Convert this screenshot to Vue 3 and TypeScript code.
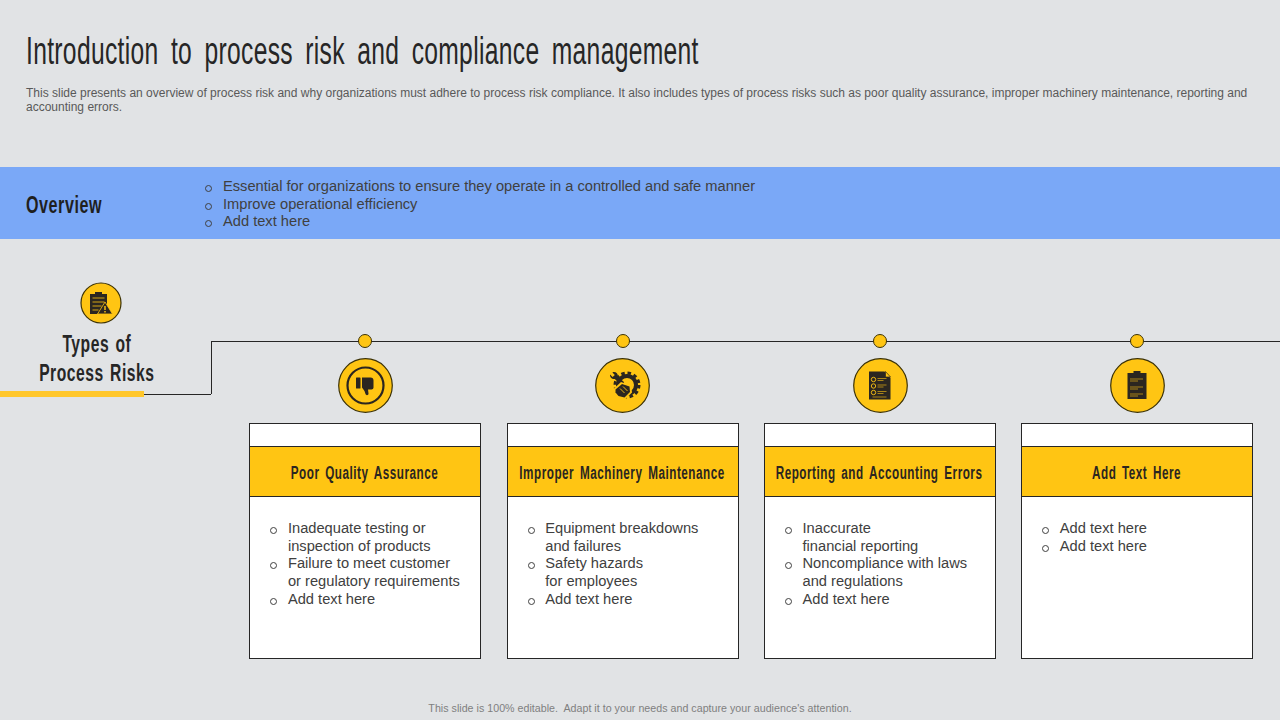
<script setup lang="ts">
interface Risk { icon: string; title: string; items: string[][] }
const overview: string[] = [
  'Essential for organizations to ensure they operate in a controlled and safe manner',
  'Improve operational efficiency',
  'Add text here',
]
const risks: Risk[] = [
  { icon: 'thumb', title: 'Poor Quality Assurance', items: [['Inadequate testing or', 'inspection of products'], ['Failure to meet customer', 'or regulatory requirements'], ['Add text here']] },
  { icon: 'gear', title: 'Improper Machinery Maintenance', items: [['Equipment breakdowns', 'and failures'], ['Safety hazards', 'for employees'], ['Add text here']] },
  { icon: 'doc', title: 'Reporting and Accounting Errors', items: [['Inaccurate', 'financial reporting'], ['Noncompliance with laws', 'and regulations'], ['Add text here']] },
  { icon: 'clip', title: 'Add Text Here', items: [['Add text here'], ['Add text here']] },
]
</script>

<template>
  <main class="slide">
    <header class="head">
      <h1 class="title"><span>Introduction to process risk and compliance management</span></h1>
      <p class="desc">This slide presents an overview of process risk and why organizations must adhere to process risk compliance. It also includes types of process risks such as poor quality assurance, improper machinery maintenance, reporting and accounting errors.</p>
    </header>

    <section class="band">
      <h2 class="band-title"><span>Overview</span></h2>
      <ul class="list band-list">
        <li v-for="t in overview" :key="t"><span>{{ t }}</span></li>
      </ul>
    </section>

    <section class="risks">
      <div class="intro">
        <svg class="intro-icon" viewBox="0 0 42 42">
          <circle cx="21" cy="21" r="20" fill="#ffc513" stroke="#3c3206" stroke-width="1.2" />
          <path d="M10 12h5v-2h7v2h5v11l-6 9H10z" fill="#2b2620" />
          <path d="M12.500 16h12M12.500 20h12M12.500 24h9M12.500 28h6" stroke="#ffc513" stroke-width="0.8" />
          <path d="M25 20l7.500 12h-15z" fill="#2b2620" stroke="#ffc513" stroke-width="0.8" />
          <path d="M25 24v4M25 29v1.500" stroke="#ffc513" stroke-width="1.400" />
        </svg>
        <h2 class="intro-title"><span>Types of<br />Process Risks</span></h2>
        <div class="rule"><i></i><b></b></div>
      </div>

      <div class="track">
        <span class="wire"></span>
        <article v-for="r in risks" :key="r.title" class="col">
          <span class="dot"></span>
          <svg class="badge" viewBox="0 0 55 55">
            <circle cx="27.500" cy="27.500" r="26.800" fill="#ffc513" stroke="#3c3206" stroke-width="1.200" />
            <template v-if="r.icon === 'thumb'">
              <circle cx="27.500" cy="27.500" r="18" fill="none" stroke="#2b2620" stroke-width="2.200" />
              <rect x="18" y="19.500" width="4.500" height="11" rx="0.600" fill="#2b2620" />
              <path d="M24 19.500h8.500c2 0 3 1.200 3 3v7c0 1.300-.9 2-2 2h-3.500l.5 4c.2 1.800-2.300 2.500-3 .6l-1-3.200-2.500-3.400z" fill="#2b2620" />
            </template>
            <template v-else-if="r.icon === 'gear'">
              <circle cx="32" cy="27" r="9" fill="none" stroke="#2b2620" stroke-width="4" />
              <circle cx="32" cy="27" r="12" fill="none" stroke="#2b2620" stroke-width="3" stroke-dasharray="3.500 2.800" />
              <path d="M15 16.500l2.600 2.400 2.200-1.900-2.400-2.600c2.800-1.200 5.800.8 5.400 3.800l6.400 6-3 3-6.400-6.200c-2.900.4-5.100-1.900-4.800-4.500z" fill="#2b2620" />
              <path d="M18.500 31l7.500-7 10 3.500 1 7-7 7-8-2-4-5z" fill="#ffc513" />
              <path d="M20.500 31.500l6.500-5.500 7.500 2.500.5 5.500-5.500 5.500-6-1.500-3-3.500z" fill="#2b2620" />
              <path d="M25 30.500l4.500 4.500M28 28.500l4.500 4.500" stroke="#ffc513" stroke-width="0.900" />
            </template>
            <template v-else-if="r.icon === 'doc'">
              <path d="M16 13.500h15.500l6 6.500v21.500h-21.500z" fill="#2b2620" />
              <path d="M32.500 13.500l5 5.500h-5z" fill="#ffc513" stroke="#2b2620" stroke-width="0.700" />
              <circle cx="20.500" cy="21.500" r="2.200" fill="none" stroke="#ffc513" stroke-width="0.900" />
              <circle cx="20.500" cy="28" r="2.200" fill="none" stroke="#ffc513" stroke-width="0.900" />
              <circle cx="20.500" cy="34.500" r="2.200" fill="none" stroke="#ffc513" stroke-width="0.900" />
              <path d="M24.500 20.500h9M24.500 22.500h6M24.500 27h9M24.500 29h6M24.500 33.500h9M24.500 35.500h6M19.500 39h14" stroke="#ffc513" stroke-width="0.600" />
            </template>
            <template v-else>
              <path d="M17.500 15h6v-2h7v2h6v26h-19z" fill="#2b2620" />
              <path d="M20 21h13M20 23h8M20 29h13M20 31h8M20 36h13M20 38h8" stroke="#ffc513" stroke-width="0.600" />
            </template>
          </svg>
          <div class="card">
            <div class="card-top"></div>
            <h3 class="card-head"><span>{{ r.title }}</span></h3>
            <ul class="list card-list">
              <li v-for="(lines, i) in r.items" :key="i">
                <span><template v-for="(l, j) in lines" :key="j">{{ l }}<br v-if="j < lines.length - 1" /></template></span>
              </li>
            </ul>
          </div>
        </article>
      </div>
    </section>

    <footer class="foot">This slide is 100% editable.&nbsp; Adapt it to your needs and capture your audience's attention.</footer>
  </main>
</template>

<style scoped>
.slide {
  width: 1280px;
  height: 720px;
  overflow: hidden;
  background: #e1e3e5;
  font-family: "Liberation Sans", Arial, sans-serif;
  color: #404040;
  display: flex;
  flex-direction: column;
}
.head { height: 167px; padding: 30px 26px 0; box-sizing: border-box; }
.title {
  margin: 0;
  height: 42px;
  font: 400 38px/42px "Liberation Sans Narrow", "Liberation Sans", sans-serif;
  color: #262626;
  white-space: nowrap;
}
.title span { display: inline-block; transform: scaleX(0.648); transform-origin: left center; word-spacing: 8px; letter-spacing: 0.5px; }
.desc {
  margin: 14px 0 0;
  font-size: 12px;
  line-height: 14px;
  color: #595959;
  width: 1228px;
}
.band {
  height: 72px;
  background: #7aa8f7;
  display: flex;
  align-items: center;
  padding-left: 26px;
}
.band-title {
  width: 177.5px;
  margin: 3px 0 0;
  font: 700 23px/26px "Liberation Sans Narrow", "Liberation Sans", sans-serif;
  color: #1f1f1f;
}
.band-title span, .intro-title span, .card-head span { display: inline-block; }
.band-title span { transform: scaleX(0.7); transform-origin: left center; letter-spacing: 0.8px; }
.list { margin: 0; padding: 0; list-style: none; font-size: 14.67px; line-height: 17.75px; color: #404040; }
.band-list { padding-top: 3px; }
.list li { display: flex; align-items: flex-start; }
.list li::before {
  content: "";
  flex: none;
  width: 5px;
  height: 5px;
  margin: 7px 10.5px 0 1px;
  border: 1px solid #404040;
  border-radius: 50%;
}
.list.band-list li::before { margin-right: 11.5px; }
.risks { flex: 1; display: flex; min-height: 0; }
.intro { width: 211px; flex: none; height: 158px; padding-top: 43px; display: flex; flex-direction: column; }
.intro-icon { width: 42px; height: 42px; margin-left: 80px; flex: none; }
.intro-title {
  width: 194px;
  margin: 6px 0 0;
  text-align: center;
  font: 700 23px/29px "Liberation Sans Narrow", "Liberation Sans", sans-serif;
  color: #262626;
}
.intro-title span { transform: scaleX(0.68); letter-spacing: 0.8px; word-spacing: 2px; }
.rule { display: flex; align-items: center; height: 6px; margin-top: 3px; }
.rule i { width: 144px; height: 6px; background: #ffc72c; }
.rule b { flex: 1; height: 1px; background: #262626; }
.track {
  position: relative;
  flex: 1;
  margin-top: 102px;
  padding-left: 38.45px;
  display: grid;
  grid-template-columns: repeat(4, 232px);
  column-gap: 25.3px;
  align-items: start;
}
.wire {
  position: absolute;
  left: 0;
  top: 0;
  right: 0;
  height: 52px;
  border-top: 1px solid #262626;
  border-left: 1px solid #262626;
}
.col { position: relative; display: flex; flex-direction: column; align-items: center; }
.dot {
  width: 12px;
  height: 12px;
  margin-top: -7px;
  border: 1px solid #3c3206;
  border-radius: 50%;
  background: #ffc513;
}
.badge { width: 55px; height: 55px; margin-top: 10px; flex: none; }
.card {
  margin-top: 10px;
  width: 232px;
  height: 236px;
  box-sizing: border-box;
  border: 1px solid #262626;
  background: #fff;
}
.card-top { height: 22px; }
.card-head {
  height: 51px;
  box-sizing: border-box;
  margin: 0;
  padding: 2px 2px 0 0;
  border-top: 1px solid #262626;
  border-bottom: 1px solid #262626;
  background: #ffc513;
  display: flex;
  align-items: center;
  justify-content: center;
  font: 700 18px/22px "Liberation Sans Narrow", "Liberation Sans", sans-serif;
  color: #2b2620;
  white-space: nowrap;
}
.card-head span { transform: scaleX(0.65); letter-spacing: 0.8px; word-spacing: 3px; flex: none; }
.card-list { padding: 22.8px 0 0 19px; }
.foot {
  height: 24px;
  box-sizing: border-box;
  padding-top: 5px;
  text-align: center;
  font-size: 10.67px;
  line-height: 14px;
  letter-spacing: 0.02px;
  color: #7f7f7f;
}
</style>
